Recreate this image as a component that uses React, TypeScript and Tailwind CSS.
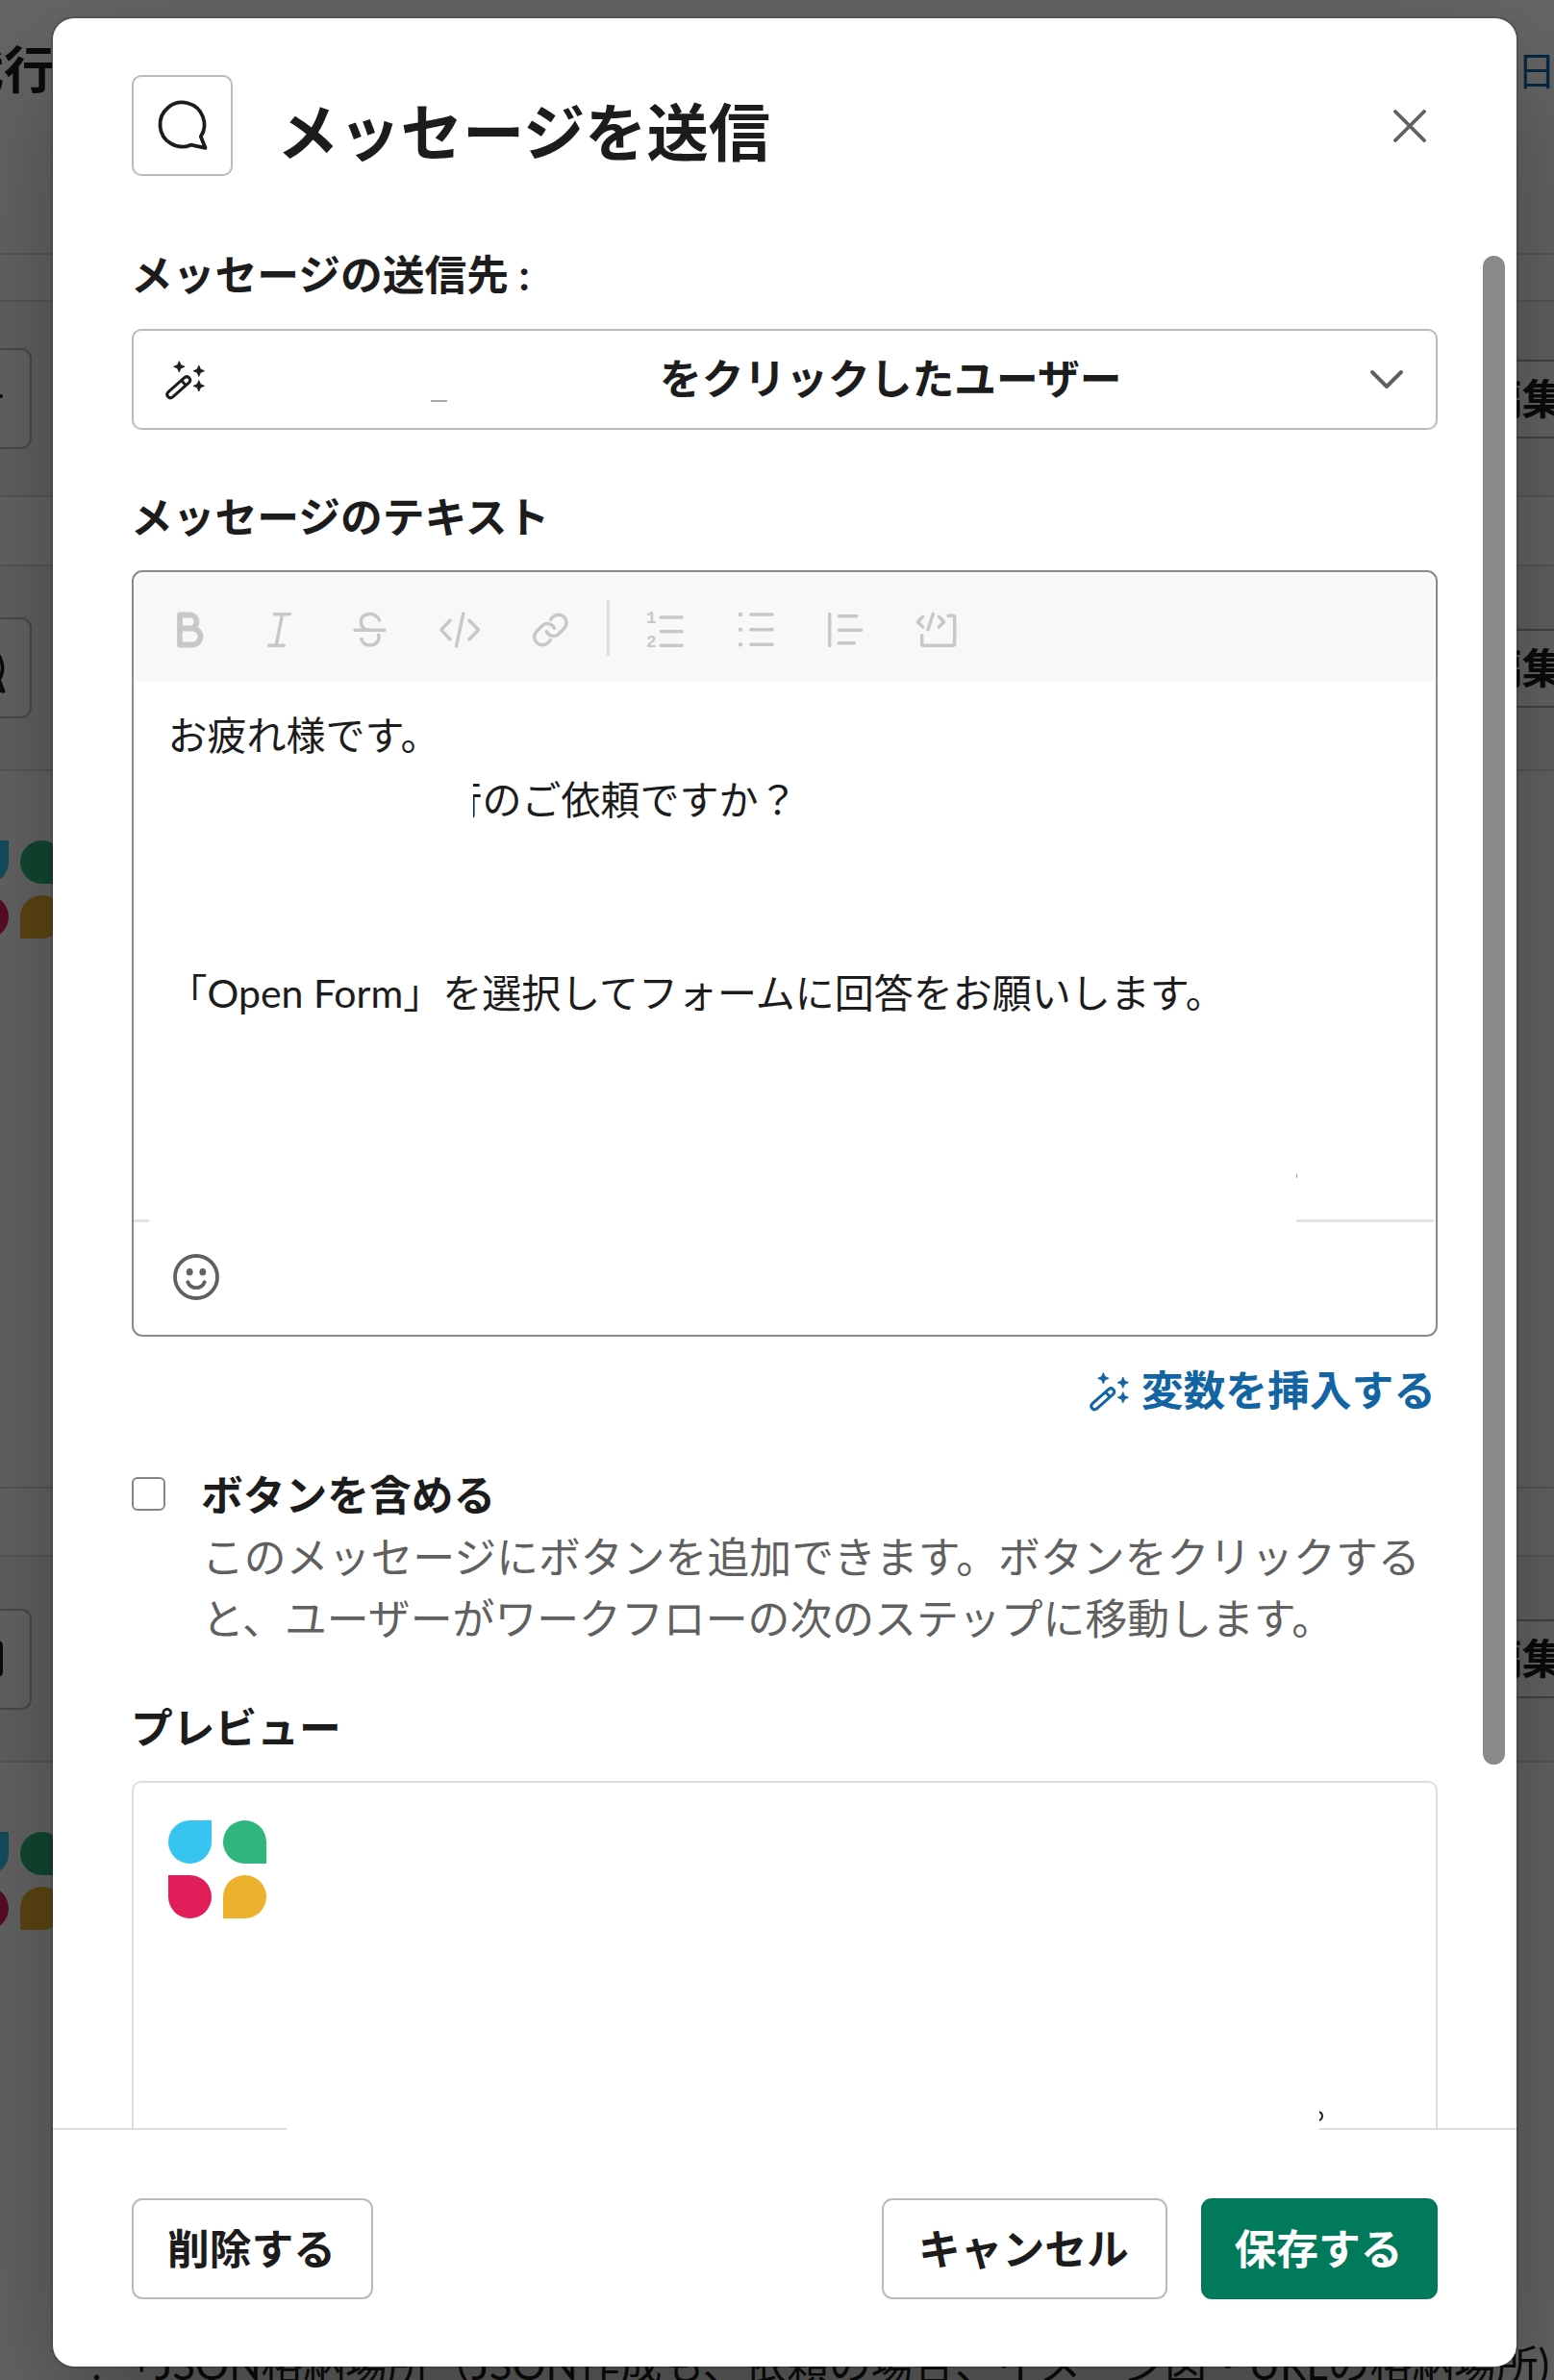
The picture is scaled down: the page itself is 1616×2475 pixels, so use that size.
import type { ReactNode } from 'react'

type IconProps = { className?: string }

function BubbleIcon({ className = '' }: IconProps) {
  return (
    <svg viewBox="0 0 60 60" className={`h-[60px] w-[60px] shrink-0 ${className}`} fill="none" stroke="currentColor" strokeWidth="3.8" strokeLinejoin="round">
      <path d="M53.5 53.8L48.8 42A23 23 0 1 0 38.5 50.7Z" />
    </svg>
  )
}

function WandIcon({ className = '' }: IconProps) {
  return (
    <svg viewBox="0 0 46 46" className={`h-[46px] w-[46px] shrink-0 ${className}`} fill="none" stroke="currentColor" strokeWidth="3" strokeLinejoin="round">
      <path d="M22.2 21.4A3.5 3.5 0 0 1 26.8 26.6L9.3 42.1A3.5 3.5 0 0 1 4.7 36.9Z" />
      <path d="M18.6 24.6l4.6 5.2" />
      <g fill="currentColor" stroke="currentColor" strokeWidth="0.8">
        <path d="M16.3 4.6l1.7 4 4 1.7-4 1.7-1.7 4-1.7-4-4-1.7 4-1.7z" />
        <path d="M36.8 9l1.7 4 4 1.7-4 1.7-1.7 4-1.7-4-4-1.7 4-1.7z" />
        <path d="M36.8 24.6l1.7 4 4 1.7-4 1.7-1.7 4-1.7-4-4-1.7 4-1.7z" />
      </g>
    </svg>
  )
}

function ToolIcon({ children }: { children: ReactNode }) {
  return (
    <svg viewBox="0 0 52 52" className="h-[52px] w-[52px] shrink-0" fill="none" stroke="currentColor" strokeWidth="3.5" strokeLinecap="round" strokeLinejoin="round">
      {children}
    </svg>
  )
}

function AppLogo() {
  return (
    <div className="grid h-[102px] w-[102px] shrink-0 grid-cols-[45px_45px] grid-rows-[45px_45px] gap-3">
      <div className="rounded-full rounded-tr-none bg-[#36c5f0]" />
      <div className="rounded-full rounded-br-none bg-[#2eb67d]" />
      <div className="rounded-full rounded-tl-none bg-[#e01e5a]" />
      <div className="rounded-full rounded-bl-none bg-[#ecb22e]" />
    </div>
  )
}

function StepRow({ height, icon }: { height: string; icon: ReactNode }) {
  return (
    <div className={`flex shrink-0 items-center justify-between border-b-2 border-[#ddd] bg-[#f8f8f8] ${height}`}>
      <div className="-ml-[72px] flex h-[105px] w-[105px] items-center justify-center rounded-[11px] border-2 border-[#bbb] bg-white">
        {icon}
      </div>
      <div className="-mr-[52px] flex h-[82px] w-[171px] items-center justify-center border-y-2 border-[#aaa] bg-white font-bold">
        編集
      </div>
    </div>
  )
}

function Workflow() {
  return (
    <div className="flex h-full w-full flex-col overflow-hidden bg-white">
      <div className="flex h-[265px] shrink-0 items-start justify-between border-b-2 border-[#ddd]">
        <h1 className="-ml-[48px] mt-[34px] text-[52px] leading-[76px] font-bold">代行</h1>
        <span className="-mr-[2px] mt-[42px] text-[40.5px] leading-[64px] whitespace-nowrap text-[#1264a3]">日</span>
      </div>
      <div className="h-[49px] shrink-0 border-b-2 border-[#ddd]" />
      <StepRow height="h-[203px]" icon={<div className="mr-[-38px] mb-[6px] h-[4px] w-[6px] rounded-full bg-[#1d1c1d]" />} />
      <div className="h-[72px] shrink-0 border-b-2 border-[#ddd]" />
      <StepRow height="h-[213px]" icon={<BubbleIcon className="-ml-[2px]" />} />
      <div className="h-[746px] shrink-0 border-b-2 border-[#ddd] pt-[72px]">
        <div className="-ml-[36px]">
          <AppLogo />
        </div>
      </div>
      <div className="h-[71px] shrink-0 border-b-2 border-[#ddd]" />
      <StepRow height="h-[214px]" icon={<div className="h-[38px] w-[44px] rounded-[5px] border-4 border-[#1d1c1d]" />} />
      <div className="flex h-[643px] shrink-0 flex-col justify-between pt-[72px]">
        <div className="-ml-[36px]">
          <AppLogo />
        </div>
        <p className="-mb-[14px] pl-[95px] leading-[64px] whitespace-nowrap">: 「JSON格納場所（JSON作成も、依頼の場合、イメージ図・URLの格納場所)</p>
      </div>
    </div>
  )
}

function Toolbar() {
  return (
    <div className="flex h-[112px] shrink-0 items-center rounded-t-[9px] bg-[#f8f8f8] pt-[3px] pl-[30.5px] text-[#c8c8c8]">
      <div className="flex gap-[41.5px]">
        <ToolIcon>
          <path strokeWidth="5.8" strokeLinecap="butt" d="M15 10.5h10.5a7 7 0 0 1 0 14H15zM15 24.5h13a8.5 8.5 0 0 1 0 17H15z" />
        </ToolIcon>
        <ToolIcon>
          <path d="M20.5 9.7h15.8M14.5 42.3h15.8M28.5 9.7l-6.3 32.6" />
        </ToolIcon>
        <ToolIcon>
          <path d="M10 26.3h31M35.5 16c-1.8-4.3-5.6-6.6-10-6.6-5.4 0-9.2 3.4-9.2 8 0 5.8 4.5 8.6 10 8.9M16.8 35.5c1.2 4.2 4.4 6.5 9 6.5 5.6 0 9.2-3.6 9.2-8 0-1 0-1.8-.3-2.6" />
        </ToolIcon>
        <ToolIcon>
          <path d="M16 16.3L6.8 26l9.2 9.7M29.7 9.3l-7.2 33.6M36 16.3l9.6 9.7-9.6 9.7" />
        </ToolIcon>
        <ToolIcon>
          <path d="M26.5 15.3l2.3-2.6a8.3 8.3 0 0 1 11.9 11.8l-6.5 6.6a8.3 8.3 0 0 1-11.9-3.2M26.3 36.7l-2.3 2.6a8.3 8.3 0 0 1-11.9-11.8l6.5-6.6a8.3 8.3 0 0 1 11.9 3.2" />
        </ToolIcon>
      </div>
      <div className="mr-[32.5px] mb-[4px] ml-[33px] h-[58px] w-[3px] bg-[#ddd]" />
      <div className="flex gap-[42px]">
        <ToolIcon>
          <path d="M21.3 13h21.8M21.3 27.7h21.8M21.3 42.3h21.8" />
          <g fill="currentColor" stroke="none" fontFamily="Liberation Mono, monospace" fontSize="17.5" fontWeight="700">
            <text x="6" y="19">1</text>
            <text x="6" y="44">2</text>
          </g>
        </ToolIcon>
        <ToolIcon>
          <path d="M20.7 10h22.4M20.7 25.7h22.4M20.7 41.3h22.4" />
          <path strokeWidth="4.6" d="M10 10h.01M10 25.7h.01M10 41.3h.01" />
        </ToolIcon>
        <ToolIcon>
          <path d="M8.7 9.6v32.8M18.3 11.7h18.4M18.3 26.3h23.4M18.3 39.7h16" />
        </ToolIcon>
        <ToolIcon>
          <path d="M11.6 12.3l-5.3 5.4 5.3 5.2M22.4 9.3L17 25.8M28.3 12.3l5.3 5.4-5.3 5.2M38 11.3h4.7a2 2 0 0 1 2 2v27a2 2 0 0 1-2 2h-30a2 2 0 0 1-2-2v-8.6" />
        </ToolIcon>
      </div>
    </div>
  )
}

function Editor() {
  return (
    <div className="mt-[24px] flex h-[797px] shrink-0 flex-col rounded-[11px] border-2 border-[#8c8b8c] p-[2px]">
      <Toolbar />
      <div className="flex h-[559px] shrink-0 flex-col pt-[22px] pl-[33.5px] text-[41px] leading-[67px]">
        <p>お疲れ様です。</p>
        <div className="flex pl-[317px]">
          <span className="flex w-[10px] justify-end overflow-hidden">行</span>
          <span>のご依頼ですか？</span>
        </div>
        <p className="mt-[134px]">「Open Form」を選択してフォームに回答をお願いします。</p>
        <div className="mt-auto mr-[142px] mb-[43px] h-[4px] w-px self-end bg-[#999]" />
      </div>
      {/* divider is interrupted by the blank area */}
      <div className="flex h-[3px] shrink-0 justify-between">
        <div className="-ml-[2px] w-[16px] bg-[#e2e2e2]" />
        <div className="w-[143px] bg-[#e2e2e2]" />
      </div>
      <div className="flex flex-1 items-center pb-px pl-[37px]">
        <svg viewBox="0 0 52 52" className="h-[52px] w-[52px]" fill="none" stroke="#616061" strokeWidth="3.8" strokeLinecap="round">
          <circle cx="26" cy="26" r="22" />
          <path d="M17.3 31.2c1.6 4 4.8 6 8.7 6s7.1-2 8.7-6" />
          <ellipse cx="19.2" cy="20.8" rx="3.4" ry="3.8" fill="#616061" stroke="none" />
          <ellipse cx="32.8" cy="20.8" rx="3.4" ry="3.8" fill="#616061" stroke="none" />
        </svg>
      </div>
    </div>
  )
}

export default function App() {
  return (
    <div className="relative h-[2475px] w-[1616px] overflow-hidden bg-white font-['Lato','Noto_Sans_CJK_JP',sans-serif] text-[43.75px] text-[#1d1c1d]">
      <Workflow />
      <div className="absolute inset-0 bg-black/60" />

      {/* Dialog */}
      <div className="absolute top-[19px] left-[55px] flex h-[2442px] w-[1522px] flex-col rounded-[22px] bg-white shadow-[0_0_0_2px_rgba(29,28,29,0.2),0_52px_139px_0_rgba(0,0,0,0.35)]">
        <header className="flex shrink-0 items-center px-[82px] pt-[59px]">
          <div className="flex h-[105px] w-[105px] items-center justify-center rounded-[10px] border-2 border-[#bbb] pb-px">
            <BubbleIcon />
          </div>
          <h2 className="ml-[46px] flex-1 pt-[14px] text-[64.3px] leading-[90px] font-bold">メッセージを送信</h2>
          <svg viewBox="0 0 34 34" className="mr-[12px] h-[34px] w-[34px]" fill="none" stroke="#616061" strokeWidth="3.8" strokeLinecap="round">
            <path d="M2 2l30 30M32 2L2 32" />
          </svg>
        </header>

        <div className="flex min-h-0 flex-1 flex-col overflow-hidden px-[82px] pt-[71px] leading-[63px]">
          <div className="-ml-px font-bold">メッセージの送信先 :</div>
          <div className="mt-[25px] flex h-[105px] shrink-0 items-center rounded-[10px] border-2 border-[#bbb] pr-[33px] pb-[2px] pl-[30.5px] font-bold">
            <WandIcon />
            <div className="mt-[46px] ml-[232px] h-[2px] w-[17px] bg-[#aaa]" />
            <span className="ml-[221.5px] flex-1">をクリックしたユーザー</span>
            <svg viewBox="0 0 36 22" className="h-[22px] w-[36px]" fill="none" stroke="#616061" strokeWidth="4" strokeLinecap="round" strokeLinejoin="round">
              <path d="M3 4l15 15L33 4" />
            </svg>
          </div>

          <div className="mt-[59px] -ml-px font-bold">メッセージのテキスト</div>
          <Editor />

          <div className="mt-[24px] flex items-center justify-end gap-[10px] pr-[2px] font-bold text-[#1264a3]">
            <WandIcon />
            変数を挿入する
          </div>

          <div className="mt-[45px] flex">
            <div className="mt-[14px] h-[35px] w-[35px] shrink-0 rounded-[6px] border-[2.5px] border-[#868686]" />
            <div className="ml-[38px] leading-[64px]">
              <div className="-ml-px font-bold">ボタンを含める</div>
              <p className="w-[1280px] pt-px text-[43.87px] text-[#616061]">
                このメッセージにボタンを追加できます。ボタンをクリックする
                <br />
                と、ユーザーがワークフローの次のステップに移動します。
              </p>
            </div>
          </div>

          <div className="mt-[50px] -ml-px font-bold">プレビュー</div>
          <div className="mt-[24px] flex flex-1 flex-col justify-between rounded-t-[10px] border-2 border-b-0 border-[#ddd] pt-[39px] pl-[36px]">
            <AppLogo />
            <div className="mr-[117px] mb-[7px] flex h-[11px] w-[4px] justify-end self-end overflow-hidden">
              <div className="h-[11px] w-[11px] shrink-0 rounded-full border-2 border-[#1d1c1d]" />
            </div>
          </div>
        </div>

        <div className="flex h-[2px] shrink-0 justify-between">
          <div className="w-[243px] bg-[#ddd]" />
          <div className="w-[205px] bg-[#ddd]" />
        </div>
        <footer className="flex h-[246px] shrink-0 items-start px-[82px] pt-[71px] font-bold">
          <button className="h-[105px] w-[251px] rounded-[11px] border-2 border-[#bbb] pr-[2px]">削除する</button>
          <button className="ml-auto h-[105px] w-[297px] rounded-[11px] border-2 border-[#bbb] pr-[2px]">キャンセル</button>
          <button className="ml-[35px] h-[105px] w-[246px] rounded-[11px] bg-[#007a5a] pr-[2px] text-white">保存する</button>
        </footer>

        {/* Scrollbar thumb */}
        <div className="absolute top-[247px] right-[12px] h-[1569px] w-[23px] rounded-full bg-[#8a8a8a]" />
      </div>
    </div>
  )
}
